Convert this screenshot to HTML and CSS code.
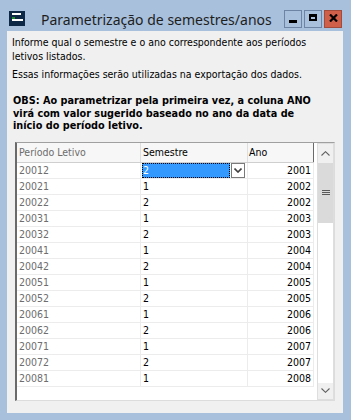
FILE: index.html
```html
<!DOCTYPE html>
<html lang="pt-BR">
<head>
<meta charset="utf-8">
<title>Parametrização de semestres/anos</title>
<link rel="stylesheet" href="styles.css">
</head>
<body>
<div class="window">
  <div class="titlebar">
    <svg class="app-icon" viewBox="0 0 16 15" width="16" height="15">
      <rect x="0" y="0" width="16" height="15" fill="#0d2747"/>
      <rect x="3" y="2" width="9" height="2" fill="#ffffff"/>
      <rect x="3" y="8" width="11" height="2" fill="#ffffff"/>
      <rect x="3" y="6" width="3" height="2" fill="#1e8c2c"/>
    </svg>
    <div class="title">Parametrização de semestres/anos</div>
    <div class="controls">
      <div class="btn btn-min"><span class="min-bar"></span></div>
      <div class="btn btn-max"><span class="max-box"></span></div>
      <div class="btn btn-close">
        <svg viewBox="0 0 9 8" width="9" height="8"><path d="M1 0.5 L8 7.5 M8 0.5 L1 7.5" stroke="#000" stroke-width="2.2" fill="none"/></svg>
      </div>
    </div>
  </div>
  <div class="content">
    <p class="info">Informe qual o semestre e o ano correspondente aos períodos letivos listados.</p>
    <p class="info second">Essas informações serão utilizadas na exportação dos dados.</p>
    <p class="obs">OBS: Ao parametrizar pela primeira vez, a coluna ANO<br>virá com valor sugerido baseado no ano da data de<br>início do período letivo.</p>
    <div class="grid">
      <div class="cells">
        <div class="row head">
          <div class="c c1">Período Letivo</div>
          <div class="c c2">Semestre</div>
          <div class="c c3">Ano</div>
        </div>
        <div class="row">
          <div class="c c1">20012</div>
          <div class="c c2 edit">
            <div class="combo"><div class="sel">2</div><div class="drop"><svg viewBox="0 0 8 5" width="8" height="5"><path d="M0.5 0.5 L4 4 L7.5 0.5" stroke="#404040" stroke-width="1.6" fill="none"/></svg></div></div>
          </div>
          <div class="c c3">2001</div>
        </div>
        <div class="row"><div class="c c1">20021</div><div class="c c2">1</div><div class="c c3">2002</div></div>
        <div class="row"><div class="c c1">20022</div><div class="c c2">2</div><div class="c c3">2002</div></div>
        <div class="row"><div class="c c1">20031</div><div class="c c2">1</div><div class="c c3">2003</div></div>
        <div class="row"><div class="c c1">20032</div><div class="c c2">2</div><div class="c c3">2003</div></div>
        <div class="row"><div class="c c1">20041</div><div class="c c2">1</div><div class="c c3">2004</div></div>
        <div class="row"><div class="c c1">20042</div><div class="c c2">2</div><div class="c c3">2004</div></div>
        <div class="row"><div class="c c1">20051</div><div class="c c2">1</div><div class="c c3">2005</div></div>
        <div class="row"><div class="c c1">20052</div><div class="c c2">2</div><div class="c c3">2005</div></div>
        <div class="row"><div class="c c1">20061</div><div class="c c2">1</div><div class="c c3">2006</div></div>
        <div class="row"><div class="c c1">20062</div><div class="c c2">2</div><div class="c c3">2006</div></div>
        <div class="row"><div class="c c1">20071</div><div class="c c2">1</div><div class="c c3">2007</div></div>
        <div class="row"><div class="c c1">20072</div><div class="c c2">2</div><div class="c c3">2007</div></div>
        <div class="row"><div class="c c1">20081</div><div class="c c2">1</div><div class="c c3">2008</div></div>
      </div>
      <div class="vscroll">
        <div class="sb-btn sb-up"><svg viewBox="0 0 9 5" width="9" height="5"><path d="M0.5 4.5 L4.5 0.7 L8.5 4.5" stroke="#606060" stroke-width="1.1" fill="none"/></svg></div>
        <div class="sb-thumb"><span class="grip"></span></div>
        <div class="sb-track"></div>
        <div class="sb-btn sb-down"><svg viewBox="0 0 9 5" width="9" height="5"><path d="M0.5 0.5 L4.5 4.3 L8.5 0.5" stroke="#606060" stroke-width="1.1" fill="none"/></svg></div>
      </div>
    </div>
  </div>
</div>
</body>
</html>
```

FILE: styles.css
```css
* { box-sizing: border-box; }

body {
  margin: 0;
  background: #a8c0dc;
}

.window {
  width: 351px;
  height: 420px;
  background: #a8c0dc;
  display: flex;
  flex-direction: column;
}

/* ---------- title bar ---------- */
.titlebar {
  height: 31px;
  padding: 6px 9px 0 9px;
  display: flex;
  align-items: center;
  flex: none;
}

.app-icon {
  flex: none;
  display: block;
}

.title {
  flex: 1;
  margin-left: 16px;
  font-family: "Noto Sans", "Open Sans", sans-serif;
  font-size: 14px;
  color: #1e1e1e;
  white-space: nowrap;
  padding-top: 2px;
}

.controls {
  display: flex;
  gap: 2px;
  flex: none;
}

.btn {
  width: 18px;
  height: 18px;
  border: 1px solid #6d84a4;
  display: flex;
  align-items: center;
  justify-content: center;
}

.btn-close {
  background: #cf5f48;
  border-color: #a04b3c;
}

.min-bar {
  width: 8px;
  height: 3px;
  background: #000;
  margin-top: 5px;
}

.max-box {
  width: 8px;
  height: 7px;
  border: 2px solid #000;
  border-top-width: 3px;
  margin-top: -2px;
}

.btn-close svg { display: block; margin-top: -1px; }

/* ---------- content ---------- */
.content {
  flex: 1;
  margin: 0 8px 7px 7px;
  background: #f0f0f0;
  padding: 4px 0 0 5px;
  font-family: "DejaVu Sans Condensed", "DejaVu Sans", sans-serif;
  font-stretch: condensed;
  font-size: 10.5px;
  color: #000;
}

.info {
  margin: 0;
  line-height: 14px;
  max-width: 318px;
}

.info.second {
  margin-top: 4px;
}

.obs {
  margin: 14px 0 0 0;
  line-height: 12.5px;
  font-size: 10.8px;
  font-weight: bold;
  white-space: nowrap;
  padding-left: 1px;
}

/* ---------- grid ---------- */
.grid {
  margin: 9px 0 0 3px;
  width: 320px;
  height: 259px;
  display: flex;
  border-left: 2px solid #6a6a6a;
  border-top: 1px solid #a0a0a0;
  border-right: 1px solid #dcdcdc;
  border-bottom: 1px solid #dcdcdc;
  background: #fff;
}

.cells {
  width: 300px;
  flex: none;
}

.row {
  display: flex;
  height: 16px;
  border-bottom: 1px solid #ececec;
  width: 297px;
}

.row.head {
  height: 20px;
  background: #f7f7f7;
  border-bottom: 1px solid #cfcfcf;
}

.c {
  line-height: 15px;
  white-space: nowrap;
  border-right: 1px solid #ececec;
}

.head .c {
  line-height: 19px;
  border-right-color: #dedede;
}

.c1 {
  width: 124px;
  padding-left: 2px;
  color: #6d6d6d;
}

.c2 {
  width: 107px;
  padding-left: 2px;
}

.c3 {
  width: 66px;
  text-align: right;
  padding-right: 2px;
}

.head .c3 {
  text-align: left;
  padding-left: 1px;
  border-right: 1px solid #6a6a6a;
}

.c2.edit {
  padding-left: 1px;
}

.combo {
  display: flex;
  height: 15px;
  gap: 1px;
}

.sel {
  width: 88px;
  height: 15px;
  border: 1px dotted #000;
  background: #3399ff;
  color: #fff;
  line-height: 13px;
  padding-left: 0;
}

.drop {
  width: 14px;
  height: 15px;
  border: 1px solid #7a7a7a;
  background: #fff;
  display: flex;
  align-items: center;
  justify-content: center;
}

.drop svg { display: block; margin-top: 1px; }

/* ---------- vertical scrollbar ---------- */
.vscroll {
  width: 17px;
  flex: none;
  display: flex;
  flex-direction: column;
  border: 1px solid #dedede;
  background: #fff;
}

.sb-btn {
  height: 18px;
  display: flex;
  align-items: center;
  justify-content: center;
  background: #f0f0f0;
  flex: none;
}

.sb-up { height: 19px; }
.sb-down { height: 16px; }

.sb-btn svg { display: block; }

.sb-thumb {
  height: 60px;
  background: #dadada;
  display: flex;
  align-items: center;
  justify-content: center;
  flex: none;
}

.grip {
  width: 8px;
  height: 5px;
  border-top: 1px solid #5a5a5a;
  border-bottom: 1px solid #5a5a5a;
  background: linear-gradient(#5a5a5a, #5a5a5a) center / 100% 1px no-repeat;
}

.sb-track {
  flex: 1;
  background: #fff;
}
```
